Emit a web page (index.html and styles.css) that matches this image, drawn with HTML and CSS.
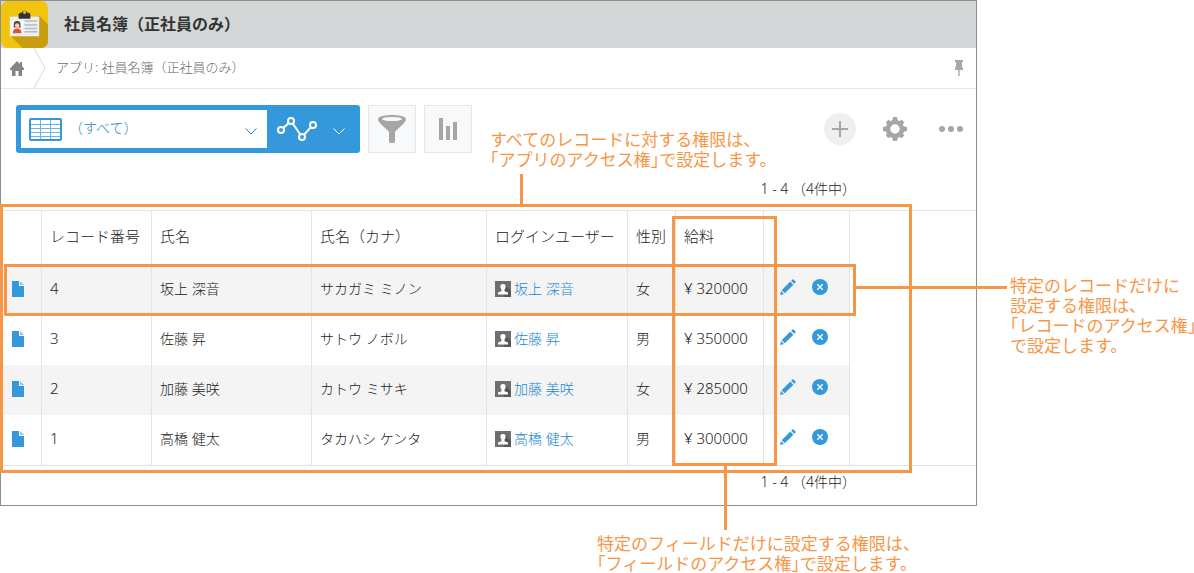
FILE: index.html
```html
<!DOCTYPE html>
<html lang="ja">
<head>
<meta charset="utf-8">
<title>社員名簿（正社員のみ）</title>
<link rel="stylesheet" href="styles.css">
</head>
<body>
<svg class="defs" aria-hidden="true">
  <symbol id="file" viewBox="0 0 12 16"><path d="M0 0h7v5h5v11H0z" fill="#3498db"/><path d="M8 0l4 4H8z" fill="#8fc5ea"/></symbol>
  <symbol id="user" viewBox="0 0 16 16"><path d="M0 0h16v16H0z" fill="#6f6f6f"/><path d="M10 4l6 6v6H9z" fill="#575757"/><path d="M8 3c2 0 2.800 1.300 2.600 3-.1 1.200-.6 1.800-1.100 2.400v1.800l3.500 1.300V13.500H3v-2l3.500-1.300V8.400C6 7.800 5.500 7.200 5.400 6 5.200 4.300 6 3 8 3z" fill="#fff"/></symbol>
  <symbol id="pencil" viewBox="0 0 16 16"><path d="M0 16l1-4 3 3zM1.700 11.200L10.300 2.600l3.100 3.100L4.800 14.300zM11.200 1.800L13 0l3 3-1.800 1.800z" fill="#3498db"/></symbol>
  <symbol id="remove" viewBox="0 0 16 16"><circle cx="8" cy="8" r="8" fill="#3498db"/><path d="M5.300 5.300l5.400 5.400M10.700 5.300l-5.400 5.400" stroke="#fff" stroke-width="1.300"/></symbol>
  <symbol id="chevron" viewBox="0 0 12 7"><path d="M.5.500L6 6l5.500-5.500" fill="none" stroke="currentColor"/></symbol>
</svg>
<div class="stage">
  <main class="window">
    <header class="app-header">
      <svg class="app-logo" viewBox="0 0 48 48" aria-hidden="true">
        <rect width="48" height="48" rx="7" fill="#f1c40f"/>
        <path d="M39 15l9 9v17a7 7 0 0 1-7 7H22L9 35z" fill="#c99d10"/>
        <path d="M9 16h30v20H9z" fill="#ecf0f1"/>
        <path d="M11 21h11v12H11z" fill="#fff"/>
        <path d="M13 24a3.500 3.500 0 0 1 7 0v3h-7z" fill="#4c423e"/><circle cx="16.500" cy="25" r="2.300" fill="#f6cba7"/><path d="M12 33c0-4 2-5 4.500-5s4.500 1 4.500 5z" fill="#e74c3c"/>
        <path d="M24 20.500h13M24 24.500h13M24 28h13M24 31.500h13" stroke="#b4bcc0" stroke-width="1.500"/>
        <path d="M18 18v-4q0-2 2-2h1a3.200 3.200 0 0 1 6 0h1q2 0 2 2v4zM24 10.200a1.600 1.600 0 1 0 .1 0z" fill="#333" fill-rule="evenodd"/>
      </svg>
      <h1 class="app-title">社員名簿（正社員のみ）</h1>
    </header>
    <nav class="breadcrumb" aria-label="パンくず">
      <a class="home" href="#" aria-label="ホーム"><svg width="14" height="15" viewBox="0 0 14 15"><path d="M7 0l3 3V1h2v4l2 2.500V9h-2v6H8.500v-5h-3v5H2V9H0V7.500z" fill="#858585"/></svg></a>
      <svg class="divider" viewBox="0 0 12 40" aria-hidden="true"><path d="M0 0l11 20L0 40" fill="none" stroke="#dfe1e2" stroke-width="1.200"/></svg>
      <a class="crumb" href="#">アプリ: 社員名簿（正社員のみ）</a>
      <button class="pin" aria-label="ピン留め"><svg width="8" height="16" viewBox="0 0 8 16"><path d="M0 0h8v2H7v5l1 1v2H4.700v6H3.300v-6H0V8l1-1V2H0z" fill="#a8a8a8"/></svg></button>
    </nav>
    <div class="toolbar">
      <div class="switcher">
        <button class="view"><svg width="33" height="23" viewBox="0 0 33 23" aria-hidden="true"><rect x="1" y="1" width="31" height="21" rx="1" fill="#fff" stroke="#3498db" stroke-width="2"/><path d="M2 6.500h29M2 10.500h29M2 14.500h29M2 18.500h29M11.500 2v19M21.500 2v19" stroke="#6ab3e4"/></svg><span class="view-name">（すべて）</span><svg class="chevron"><use href="#chevron"/></svg></button>
        <button class="graph" aria-label="グラフ"><svg width="40" height="24" viewBox="0 0 40 24"><path d="M4 13L14 4l11 16L36 8" fill="none" stroke="#fff" stroke-width="2"/><g fill="#3498db" stroke="#fff" stroke-width="2"><circle cx="4" cy="13" r="3"/><circle cx="14" cy="4" r="3"/><circle cx="25" cy="20" r="3"/><circle cx="36" cy="8" r="3"/></g></svg><svg class="chevron"><use href="#chevron"/></svg></button>
      </div>
      <button class="tool" aria-label="絞り込み"><svg width="28" height="28" viewBox="0 0 28 28"><path d="M0 4C0-1.300 28-1.300 28 4c0 4-7 8-11 13v9q0 2-3 2t-3-2v-9C7 12 0 8 0 4z" fill="#a6a6a6"/><ellipse cx="14" cy="4" rx="10" ry="2" fill="#f7f9fa"/></svg></button>
      <button class="tool" aria-label="集計"><svg width="18" height="22" viewBox="0 0 18 22"><path d="M0 0h4v22H0zM7 8h4v14H7zM14 4h4v18h-4z" fill="#a6a6a6"/></svg></button>
      <div class="actions">
        <button class="add" aria-label="追加"><svg width="16" height="16"><path d="M8 0v16M0 8h16" stroke="#a6a6a6" stroke-width="2"/></svg></button>
        <button class="plain" aria-label="設定"><svg width="24" height="24" viewBox="-12 -12 24 24"><g fill="#a6a6a6"><g id="teeth"><path d="M-2-12h4l1 5h-6zM-2 12h4l1-5h-6z"/><path d="M-12-2v4l5 1v-6zM12-2v4l-5 1v-6z"/></g><use href="#teeth" transform="rotate(45) scale(.93)"/></g><circle r="7" fill="none" stroke="#a6a6a6" stroke-width="4.500"/></svg></button>
        <button class="plain" aria-label="その他"><svg width="24" height="6"><g fill="#a6a6a6"><circle cx="3" cy="3" r="3"/><circle cx="12" cy="3" r="3"/><circle cx="21" cy="3" r="3"/></g></svg></button>
      </div>
    </div>
    <p class="pager">1 - 4 （4件中）</p>
    <div class="table-wrap">
      <table class="records">
        <colgroup><col class="c-file"><col class="c-id"><col class="c-name"><col class="c-kana"><col class="c-login"><col class="c-sex"><col class="c-pay"><col class="c-act"></colgroup>
        <thead><tr><th></th><th>レコード番号</th><th>氏名</th><th>氏名（カナ）</th><th>ログインユーザー</th><th>性別</th><th>給料</th><th></th></tr></thead>
        <tbody>
          <tr><td><a href="#" aria-label="詳細"><svg class="file"><use href="#file"/></svg></a></td><td class="num">4</td><td>坂上 深音</td><td>サカガミ ミノン</td><td><a class="user" href="#"><svg class="icon"><use href="#user"/></svg>坂上 深音</a></td><td>女</td><td class="num">¥ 320000</td><td><div class="row-tools"><button aria-label="編集"><svg class="icon"><use href="#pencil"/></svg></button><button aria-label="削除"><svg class="icon"><use href="#remove"/></svg></button></div></td></tr>
          <tr><td><a href="#" aria-label="詳細"><svg class="file"><use href="#file"/></svg></a></td><td class="num">3</td><td>佐藤 昇</td><td>サトウ ノボル</td><td><a class="user" href="#"><svg class="icon"><use href="#user"/></svg>佐藤 昇</a></td><td>男</td><td class="num">¥ 350000</td><td><div class="row-tools"><button aria-label="編集"><svg class="icon"><use href="#pencil"/></svg></button><button aria-label="削除"><svg class="icon"><use href="#remove"/></svg></button></div></td></tr>
          <tr><td><a href="#" aria-label="詳細"><svg class="file"><use href="#file"/></svg></a></td><td class="num">2</td><td>加藤 美咲</td><td>カトウ ミサキ</td><td><a class="user" href="#"><svg class="icon"><use href="#user"/></svg>加藤 美咲</a></td><td>女</td><td class="num">¥ 285000</td><td><div class="row-tools"><button aria-label="編集"><svg class="icon"><use href="#pencil"/></svg></button><button aria-label="削除"><svg class="icon"><use href="#remove"/></svg></button></div></td></tr>
          <tr><td><a href="#" aria-label="詳細"><svg class="file"><use href="#file"/></svg></a></td><td class="num">1</td><td>高橋 健太</td><td>タカハシ ケンタ</td><td><a class="user" href="#"><svg class="icon"><use href="#user"/></svg>高橋 健太</a></td><td>男</td><td class="num">¥ 300000</td><td><div class="row-tools"><button aria-label="編集"><svg class="icon"><use href="#pencil"/></svg></button><button aria-label="削除"><svg class="icon"><use href="#remove"/></svg></button></div></td></tr>
        </tbody>
      </table>
    </div>
    <p class="pager">1 - 4 （4件中）</p>
  </main>
  <div class="frame frame-app"></div>
  <div class="frame frame-record"></div>
  <div class="frame frame-field"></div>
  <div class="lead lead-app"></div>
  <div class="lead lead-record"></div>
  <div class="lead lead-field"></div>
  <p class="note note-app">すべてのレコードに対する権限は、<br>「アプリのアクセス権」で設定します。</p>
  <p class="note note-record">特定のレコードだけに<br>設定する権限は、<br>「レコードのアクセス権」<br>で設定します。</p>
  <p class="note note-field">特定のフィールドだけに設定する権限は、<br>「フィールドのアクセス権」で設定します。</p>
</div>
</body>
</html>
```

FILE: styles.css
```css
* { box-sizing: border-box; }
body { margin: 0; background: #fff; color: #222; font-family: "Noto Sans", "Noto Sans CJK JP", sans-serif; font-size: 14px; font-weight: 300; }
button { margin: 0; padding: 0; border: 0; background: none; font: inherit; color: inherit; cursor: pointer; }
a { color: #2288d0; text-decoration: none; }
h1, p { margin: 0; }
svg { display: block; flex: none; }
.defs { position: absolute; width: 0; height: 0; }
.stage { position: relative; padding: 0 217px 67px 0; }
.window { border: 1px solid #8f8f8f; }

.app-header { display: flex; align-items: center; gap: 16px; height: 47px; background: #d4d7d7; }
.app-logo { width: 47px; height: 47px; }
.app-title { padding-bottom: 2px; color: #333; font-size: 16px; line-height: 24px; font-weight: 700; }

.breadcrumb { display: flex; align-items: center; height: 41px; padding: 0 13px 0 9px; border-bottom: 1px solid #e3e7e8; }
.divider { width: 12px; height: 40px; margin: 0 10px; }
.crumb { padding-bottom: 2px; color: #6c6c6c; font-size: 13px; line-height: 20px; }
.pin { margin-left: auto; }

.toolbar { display: flex; align-items: center; gap: 8px; padding: 16px 13px 0 15px; }
.switcher { display: flex; width: 344px; height: 48px; padding: 5px; border-radius: 3px; background: #3498db; }
.view { display: flex; align-items: center; width: 246px; padding: 0 10px 0 8px; background: #fff; color: #2288d0; }
.view-name { margin-left: 7px; padding-bottom: 2px; line-height: 20px; }
.chevron { width: 12px; height: 7px; margin: 4px 0 0 auto; }
.graph { display: flex; flex: 1; align-items: center; padding: 0 10px; color: #fff; }
.tool { display: grid; place-items: center; width: 48px; height: 48px; border: 1px solid #e3e7e8; background: #f7f9fa; }
.actions { display: flex; align-items: center; gap: 27px; margin-left: auto; }
.add { display: grid; place-items: center; width: 32px; height: 32px; border-radius: 50%; background: #efefef; }
.plain + .plain { margin-left: 5px; }

.pager { padding: 6px 120px 13px 0; line-height: 20px; text-align: right; }
.toolbar + .pager { padding-top: 26px; padding-bottom: 11px; }
.table-wrap { border: solid #e3e3e3; border-width: 1px 0; }
.records { width: 849px; table-layout: fixed; border-collapse: separate; border-spacing: 0; }
.c-file { width: 41px; }
.c-id { width: 110px; }
.c-name { width: 160px; }
.c-kana { width: 175px; }
.c-login { width: 141px; }
.c-sex { width: 48px; }
.c-pay { width: 88px; }
.c-act { width: 86px; }
.records th, .records td { padding: 0 0 2px 8px; border-right: 1px solid #e3e3e3; text-align: left; white-space: nowrap; line-height: 20px; }
.records th { height: 54px; padding-bottom: 4px; font-size: 15px; font-weight: 300; }
.records td { height: 50px; }
.records td:first-child { padding-left: 11px; }
.records tbody tr:nth-child(odd) { background: #f4f4f4; }
.records .num { padding-bottom: 4px; font-size: 15px; }
.file { width: 12px; height: 16px; }
.icon { width: 16px; height: 16px; }
.user { display: flex; align-items: center; gap: 3px; }
.row-tools { display: flex; gap: 16px; padding: 0 0 4px 8px; }

.frame { position: absolute; border: 3px solid #f79646; pointer-events: none; }
.frame-app { left: 0; top: 204px; width: 912px; height: 269px; }
.frame-record { left: 4px; top: 264px; width: 852px; height: 52px; }
.frame-field { left: 672px; top: 216px; width: 105px; height: 250px; }
.lead { position: absolute; background: #f79646; }
.lead-app { left: 520px; top: 174px; width: 3px; height: 31px; }
.lead-record { left: 855px; top: 286px; width: 152px; height: 3px; }
.lead-field { left: 724px; top: 465px; width: 3px; height: 65px; }
.note { position: absolute; color: #f79646; font-size: 17px; font-weight: 400; line-height: 20px; white-space: nowrap; font-feature-settings: "halt"; }
.note-app { left: 490px; top: 130px; }
.note-record { left: 1010px; top: 276px; }
.note-field { left: 597px; top: 534px; }
```
